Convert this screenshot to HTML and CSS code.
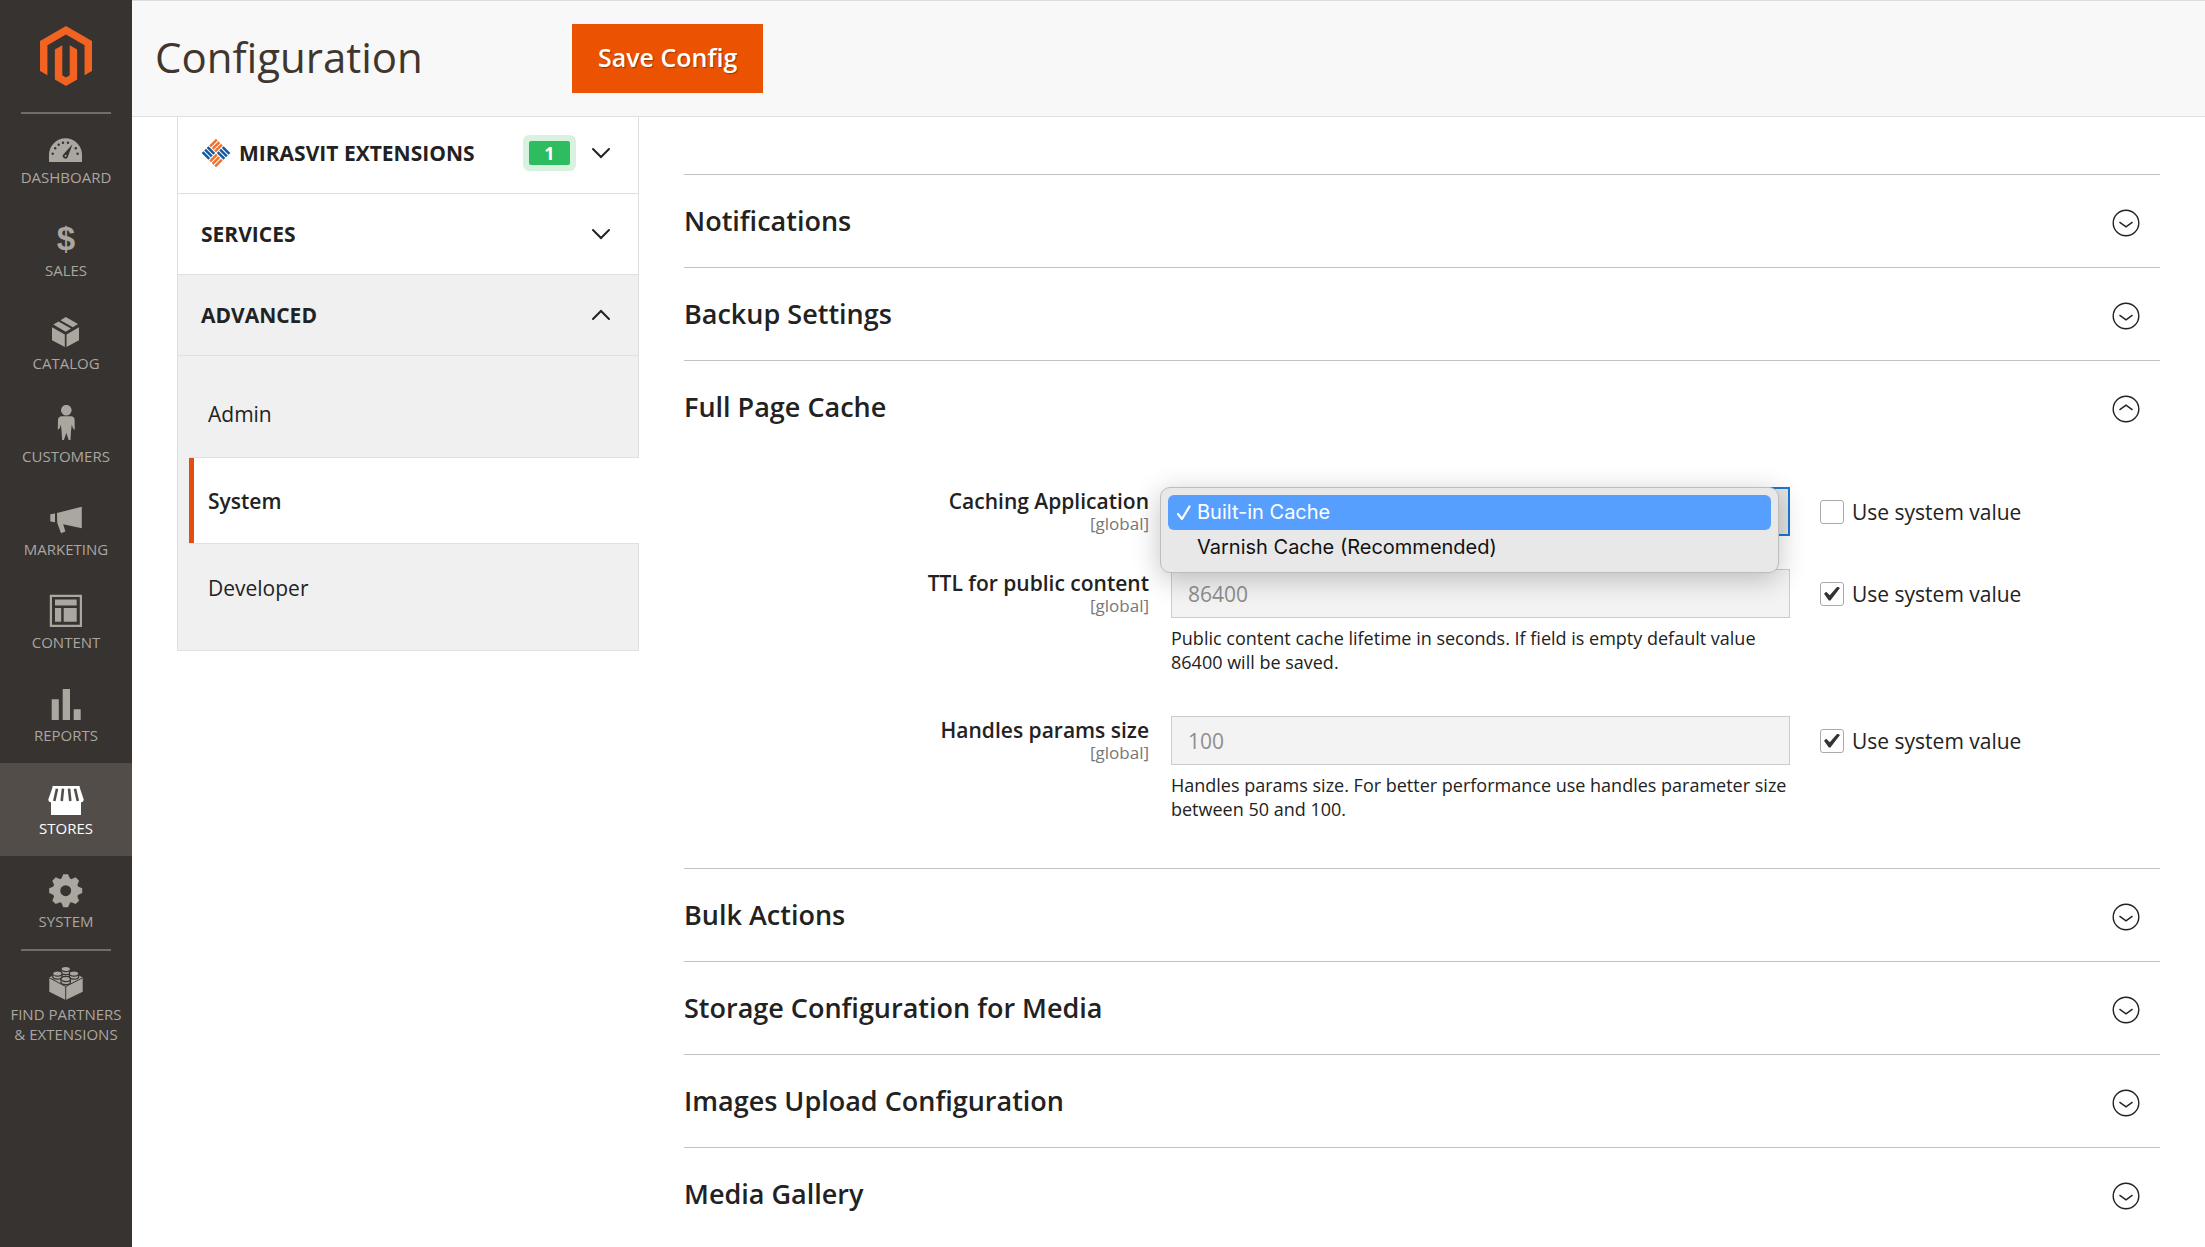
FILE: index.html
```html
<!DOCTYPE html>
<html lang="en">
<head>
<meta charset="utf-8">
<meta name="viewport" content="width=device-width, initial-scale=1">
<title>Configuration</title>
<link rel="stylesheet" href="styles.css">
</head>
<body>
<svg class="sprite" aria-hidden="true">
  <symbol id="chevron" viewBox="0 0 20 12"><path d="M2 2l8 8 8-8" fill="none" stroke="currentColor" stroke-width="2" stroke-linecap="round"/></symbol>
  <symbol id="circle-down" viewBox="0 0 28 28"><circle cx="14" cy="14" r="12.8" fill="none" stroke="currentColor" stroke-width="1.4"/><path d="M7.5 13.2l6.5 4.6 6.5-4.6" fill="none" stroke="currentColor" stroke-width="1.5"/></symbol>
</svg>
<div class="layout">
  <aside class="menu">
    <a class="logo" href="#" aria-label="Magento">
      <svg width="60" height="60" viewBox="0 0 24 24" fill="#f26322"><path d="M12 24l-4.455-2.572v-12l2.97-1.715v12.001l1.485.902 1.485-.902V7.713l2.971 1.715v12L12 24zM22.391 6.001V18l-2.969 1.714V7.713L12 3.43 4.574 7.713v12.001L1.609 18V6.001L12 0l10.391 6.001z"/></svg>
    </a>
    <nav class="menu-list">
      <a class="menu-item" href="#">
        <svg class="menu-icon" viewBox="0 0 40 40"><path fill="currentColor" d="M3 36v-7.200a16.500 16.500 0 0 1 33 0V36z"/><g fill="#373330"><circle cx="6.700" cy="27.700" r="1.200"/><circle cx="9.200" cy="22.300" r="1.200"/><circle cx="12.700" cy="18.700" r="1.200"/><circle cx="17" cy="16.800" r="1.200"/><circle cx="22" cy="16.800" r="1.200"/><circle cx="29.800" cy="22.300" r="1.200"/><circle cx="31.600" cy="27.700" r="1.200"/><path d="M26.500 18.300L21.700 31.200a2.600 2.600 0 1 1-4.200-3z"/></g><circle cx="19.600" cy="29.800" r="1" fill="currentColor"/></svg>
        <span>DASHBOARD</span>
      </a>
      <a class="menu-item" href="#"><span class="menu-icon dollar" aria-hidden="true">$</span><span>SALES</span></a>
      <a class="menu-item" href="#">
        <svg class="menu-icon" viewBox="0 0 40 40" fill="currentColor"><path d="M6 15.300l12.800 7.200V35L6 28.200zM20.500 22.500L33 15.300v12.900L20.500 35zM7.300 12.600l5.200-3.100 12.500 7.100-5.300 3.200zM14.500 8.300L19.800 5l12.200 7-5.200 3.300z"/></svg>
        <span>CATALOG</span>
      </a>
      <a class="menu-item" href="#">
        <svg class="menu-icon" viewBox="0 0 40 40" fill="currentColor"><circle cx="20.300" cy="5.200" r="5.300"/><path d="M16 11.300h8.800q3.600 0 3.800 3.600l.2 10.100-2-2-1-3.500-.8 7-.5 8.500h-1.800l-2.400-7-2.400 7h-1.800l-.5-8.500-.8-7-1 3.500-2 2 .2-10.100q.2-3.600 4-3.600z"/></svg>
        <span>CUSTOMERS</span>
      </a>
      <a class="menu-item" href="#">
        <svg class="menu-icon" viewBox="0 0 40 40" fill="currentColor"><path d="M4.300 16.300L9 15.600v8.600l-4.700-.7zM11 15l24.800-6.300v21.600L17.200 26.200l2.200 7.200-4.400 1.900-3.800-10.600z"/></svg>
        <span>MARKETING</span>
      </a>
      <a class="menu-item" href="#">
        <svg class="menu-icon" viewBox="0 0 40 40" fill="currentColor"><path fill-rule="evenodd" d="M3.800 3.700H36V36H3.800zM6 6v27.800h27.800V6z"/><path d="M9 8.500h21.700v6H9zM9 17h6.200v13.700H9zM17.700 17h13v13.700h-13z"/></svg>
        <span>CONTENT</span>
      </a>
      <a class="menu-item" href="#">
        <svg class="menu-icon" viewBox="0 0 40 40" fill="currentColor"><path d="M5.700 15.300h7.100V36H5.700zM16.700 5H24v31h-7.300zM27.700 25.300h7V36h-7z"/></svg>
        <span>REPORTS</span>
      </a>
      <a class="menu-item active" href="#">
        <svg class="menu-icon" viewBox="0 0 40 40"><path fill="currentColor" d="M6.500 9h27.200v1.500l4 12q0 2.500-2.700 2.800V38H5V25.300q-2.700-.3-2.700-2.800l4.200-12z"/><path fill="none" stroke="#524d49" stroke-width="2.600" d="M11 11.700L8.300 24M17 11.700L15.700 24M23 11.700L24.300 24M29 11.700L31.800 24"/></svg>
        <span>STORES</span>
      </a>
      <a class="menu-item" href="#">
        <svg class="menu-icon" viewBox="0 0 40 40"><g transform="translate(19.700 20.700)" fill="currentColor"><circle r="9.200" fill="none" stroke="currentColor" stroke-width="7.500"/><g id="teeth"><path id="tooth" d="M-4.500-11.500L-2.400-16.500H2.400L4.500-11.500z"/><use href="#tooth" transform="rotate(45)"/><use href="#tooth" transform="rotate(90)"/><use href="#tooth" transform="rotate(135)"/></g><use href="#teeth" transform="rotate(180)"/></g></svg>
        <span>SYSTEM</span>
      </a>
      <a class="menu-item partners" href="#">
        <svg class="menu-icon" viewBox="0 0 40 40"><path fill="currentColor" d="M3.300 14.500L19.700 5.500l17 9v14.200L19.700 37 3.300 28.700z"/><path fill="none" stroke="#373330" stroke-width="1" d="M3.300 14.800l16.400 8.700 17-8.700M19.700 23.500V37"/><g fill="currentColor" stroke="#373330" stroke-width="1.200"><path d="M15 6v3a4.700 2.600 0 0 0 9.400 0V6M6.700 10.500v3a4.700 2.600 0 0 0 9.400 0v-3M23.300 10.500v3a4.700 2.600 0 0 0 9.400 0v-3M15 16v3a4.700 2.600 0 0 0 9.400 0v-3"/><ellipse cx="19.700" cy="6" rx="4.700" ry="2.600"/><ellipse cx="11.400" cy="10.500" rx="4.700" ry="2.600"/><ellipse cx="28" cy="10.500" rx="4.700" ry="2.600"/><ellipse cx="19.700" cy="16" rx="4.700" ry="2.600"/></g></svg>
        <span>FIND PARTNERS<br>&amp; EXTENSIONS</span>
      </a>
    </nav>
  </aside>

  <div class="page">
    <header class="page-header">
      <h1>Configuration</h1>
      <button class="save" type="button">Save Config</button>
    </header>

    <div class="columns">
      <nav class="config-nav">
        <button class="nav-title" type="button">
          <svg class="mirasvit" viewBox="0 0 30 30" fill="none" stroke-width="2.500"><g transform="rotate(45 15 15)"><path stroke="#f1702a" d="M6.100 4.900v9.500M9.700 4.900v9.500M13.200 4.900v9.500M16.800 15.600v9.500M20.300 15.600v9.500M23.900 15.600v9.500"/><path stroke="#14599d" d="M15.600 6.100h9.500M15.600 9.700h9.500M15.600 13.200h9.500M4.900 16.800h9.500M4.900 20.300h9.500M4.900 23.900h9.500"/></g></svg>
          <span>MIRASVIT EXTENSIONS</span>
          <span class="count">1</span>
          <svg class="chevron"><use href="#chevron"/></svg>
        </button>
        <button class="nav-title" type="button"><span>SERVICES</span><svg class="chevron"><use href="#chevron"/></svg></button>
        <button class="nav-title open" type="button" aria-expanded="true"><span>ADVANCED</span><svg class="chevron"><use href="#chevron"/></svg></button>
        <div class="subnav">
          <a href="#">Admin</a>
          <a class="current" href="#">System</a>
          <a href="#">Developer</a>
        </div>
      </nav>

      <main class="sections">
        <section><button class="section-head" type="button">Notifications<svg><use href="#circle-down"/></svg></button></section>
        <section><button class="section-head" type="button">Backup Settings<svg><use href="#circle-down"/></svg></button></section>
        <section>
          <button class="section-head open" type="button" aria-expanded="true">Full Page Cache<svg><use href="#circle-down"/></svg></button>
          <form class="fields">
            <div class="field">
              <div class="label"><label for="app">Caching Application</label><small>[global]</small></div>
              <div class="control">
                <select id="app"><option>Built-in Cache</option><option>Varnish Cache (Recommended)</option></select>
                <ul class="options" role="listbox" aria-label="Caching Application">
                  <li class="selected" role="option" aria-selected="true"><svg viewBox="0 0 16 18"><path d="M2 10l4 5 7.500-12.500" fill="none" stroke="currentColor" stroke-width="2.200" stroke-linecap="round" stroke-linejoin="round"/></svg>Built-in Cache</li>
                  <li role="option" aria-selected="false">Varnish Cache (Recommended)</li>
                </ul>
              </div>
              <label class="inherit"><input type="checkbox">Use system value</label>
            </div>
            <div class="field">
              <div class="label"><label for="ttl">TTL for public content</label><small>[global]</small></div>
              <div class="control">
                <input id="ttl" type="text" value="86400" disabled>
                <p>Public content cache lifetime in seconds. If field is empty default value 86400 will be saved.</p>
              </div>
              <label class="inherit"><input type="checkbox" checked>Use system value</label>
            </div>
            <div class="field">
              <div class="label"><label for="params">Handles params size</label><small>[global]</small></div>
              <div class="control">
                <input id="params" type="text" value="100" disabled>
                <p>Handles params size. For better performance use handles parameter size between 50 and 100.</p>
              </div>
              <label class="inherit"><input type="checkbox" checked>Use system value</label>
            </div>
          </form>
        </section>
        <section><button class="section-head" type="button">Bulk Actions<svg><use href="#circle-down"/></svg></button></section>
        <section><button class="section-head" type="button">Storage Configuration for Media<svg><use href="#circle-down"/></svg></button></section>
        <section><button class="section-head" type="button">Images Upload Configuration<svg><use href="#circle-down"/></svg></button></section>
        <section><button class="section-head" type="button">Media Gallery<svg><use href="#circle-down"/></svg></button></section>
      </main>
    </div>
  </div>
</div>
</body>
</html>
```
FILE: styles.css
```css
* { box-sizing: border-box; }

body {
  margin: 0;
  background: #fff;
  color: #222;
  font: 21px/28px "Open Sans", "Noto Sans", sans-serif;
}

a { color: inherit; text-decoration: none; }
button { border: 0; background: none; color: inherit; font: inherit; text-align: left; cursor: pointer; }
.sprite { display: none; }

.layout { display: grid; grid-template-columns: 132px minmax(0, 1fr); min-height: 100vh; }

/* Main menu */
.menu { background: #373330; color: #aaa6a0; }
.logo { display: flex; justify-content: center; height: 112px; padding-top: 26px; }
.menu-item {
  display: flex;
  flex-direction: column;
  align-items: center;
  height: 93px;
  padding-top: 14px;
  font-size: 15px;
  line-height: 20px;
  text-align: center;
  white-space: nowrap;
}
.menu-icon { width: 40px; height: 40px; margin-bottom: 1px; }
.dollar { font: bold 33px/40px "Liberation Sans", Arial, sans-serif; }
.menu-item.active { background: #524d49; color: #fff; }
.menu-item:first-child, .partners {
  background: linear-gradient(#736d67, #736d67) center top / 90px 2px no-repeat;
}
.partners { height: auto; }

/* Header */
.page-header {
  position: sticky;
  top: 0;
  z-index: 5;
  display: grid;
  grid-template-columns: 417px auto;
  justify-content: start;
  align-items: center;
  height: 117px;
  padding-left: 23px;
  border-top: 1px solid #ddd;
  border-bottom: 1px solid #e0e0e0;
  background: #f8f8f8;
}
h1 { margin: 0; padding-bottom: 4px; color: #41362f; font-size: 42px; font-weight: 400; line-height: 56px; }
.save {
  height: 69px;
  padding: 0 26px 3px;
  background: #eb5202;
  color: #fff;
  font-size: 25px;
  font-weight: 600;
  line-height: 32px;
  text-shadow: 1px 1px 1px rgba(0, 0, 0, .35);
}

.columns {
  display: grid;
  grid-template-columns: 462fr 1476fr;
  gap: 45px;
  align-items: start;
  padding: 0 45px;
}

/* Section navigation */
.config-nav { margin-top: -4px; border: 1px solid #e0e0e0; border-top: 0; }
.nav-title {
  display: flex;
  align-items: center;
  width: 100%;
  height: 81px;
  padding: 0 27px 0 23px;
  border-bottom: 1px solid #e0e0e0;
  font-weight: 700;
}
.nav-title.open { background: #f0f0f0; }
.mirasvit { width: 30px; height: 30px; margin-right: 8px; }
.chevron { width: 20px; height: 12px; margin-left: auto; }
.open > .chevron, .open > svg { transform: rotate(180deg); }
.count {
  width: 41px;
  margin-left: auto;
  border-radius: 2px;
  background: #2dbc5f;
  box-shadow: 0 0 0 6px #d8f2df;
  color: #fff;
  font-size: 18px;
  line-height: 24px;
  text-align: center;
}
.count + .chevron { margin-left: 21px; }
.subnav { padding: 14px 0 19px 11px; background: #f0f0f0; }
.subnav a { display: flex; align-items: center; height: 87px; padding-left: 19px; }
.subnav .current {
  margin-right: -1px;
  border: solid #e0e0e0;
  border-width: 1px 0;
  background: #fff;
  box-shadow: inset 5px 0 #e04e10;
  font-weight: 600;
}

/* Configuration sections */
.sections { padding-top: 57px; }
.sections section { border-top: 1px solid #c2c2c2; }
.section-head {
  display: flex;
  justify-content: space-between;
  align-items: center;
  width: 100%;
  height: 92px;
  padding: 0 20px 0 0;
  font-size: 27px;
  font-weight: 600;
  line-height: 36px;
}
.section-head svg { width: 28px; height: 28px; margin-top: 4px; }

.fields { padding: 34px 0 5px; }
.field {
  display: grid;
  grid-template-columns: 465fr 619fr 348fr;
  column-gap: 22px;
  padding-bottom: 33px;
}
.label { display: flex; flex-direction: column; text-align: right; font-weight: 600; }
.label small { color: #777; font-size: 17px; font-weight: 400; line-height: 18px; }
.control { position: relative; }
.control input, .control select {
  display: block;
  width: 100%;
  height: 49px;
  padding: 0 16px;
  border: 1px solid #ccc;
  border-radius: 0;
  background: #f3f3f3;
  color: #8e8e8e;
  font: inherit;
}
.control select { appearance: none; border: 2px solid #1979d3; background: #e3e3e3; color: #222; }
.control p { margin: 8px 0 9px; font-size: 18px; line-height: 24px; }
.options {
  position: absolute;
  z-index: 2;
  top: 0;
  right: 11px;
  left: -11px;
  margin: 0;
  padding: 7px;
  border: 1px solid #bdbdbd;
  border-radius: 10px;
  background: #e8e8e8;
  box-shadow: 0 6px 28px rgba(0, 0, 0, .24);
  color: #111;
  font: 20px/35px Inter, sans-serif;
  list-style: none;
}
.options li { display: flex; align-items: center; height: 35px; padding-left: 29px; border-radius: 6px; }
.options .selected { padding-left: 8px; background: #569fff; color: #fff; }
.options svg { width: 16px; height: 18px; margin-right: 5px; }

.inherit { display: flex; align-items: center; gap: 8px; height: 49px; padding-left: 8px; }
.inherit input {
  appearance: none;
  flex: none;
  display: grid;
  place-items: center;
  width: 24px;
  height: 24px;
  margin: 0;
  border: 1px solid #aaa;
  border-radius: 3px;
  background: #fff;
}
.inherit input:checked::before {
  content: "";
  width: 16px;
  height: 14px;
  background: #333;
  clip-path: polygon(0 52%, 14% 38%, 36% 62%, 84% 0, 100% 10%, 40% 100%, 30% 100%);
}
```
